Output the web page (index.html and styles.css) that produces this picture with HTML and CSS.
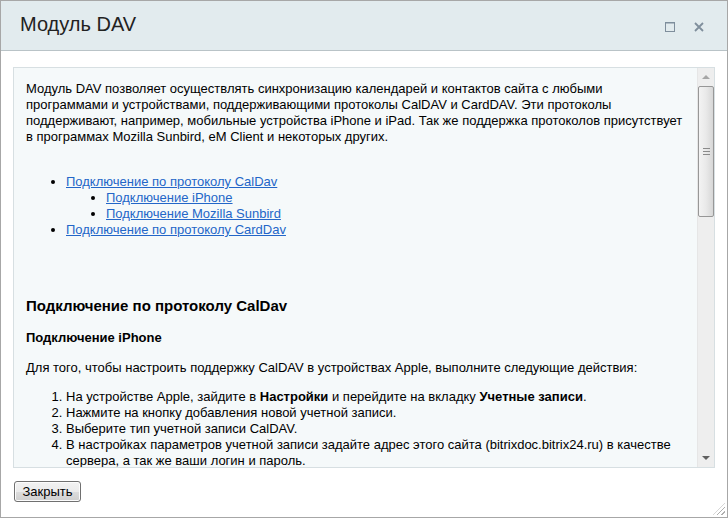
FILE: index.html
```html
<!DOCTYPE html>
<html lang="ru">
<head>
<meta charset="utf-8">
<title>Модуль DAV</title>
<link rel="stylesheet" href="styles.css">
</head>
<body>
<div class="dialog">
  <div class="header">
    <span class="title">Модуль DAV</span>
    <div class="tools">
      <svg class="tool" width="10" height="10" viewBox="0 0 10 10"><rect x="0.5" y="0.5" width="9" height="9" fill="none" stroke="#7f8e9c" stroke-width="1"/><line x1="0" y1="1" x2="10" y2="1" stroke="#7f8e9c" stroke-width="1"/></svg>
      <svg class="tool" width="10" height="10" viewBox="0 0 10 10"><path d="M1 1L9 9M9 1L1 9" stroke="#7f8e9c" stroke-width="1.8"/></svg>
    </div>
  </div>
  <div class="body">
    <div class="box">
      <div class="content">
        <p>Модуль DAV позволяет осуществлять синхронизацию календарей и контактов сайта с любыми программами и устройствами, поддерживающими протоколы CalDAV и CardDAV. Эти протоколы поддерживают, например, мобильные устройства iPhone и iPad. Так же поддержка протоколов присутствует в программах Mozilla Sunbird, eM Client и некоторых других.</p>
        <ul class="toc">
          <li><a href="#">Подключение по протоколу CalDav</a>
            <ul>
              <li><a href="#">Подключение iPhone</a></li>
              <li><a href="#">Подключение Mozilla Sunbird</a></li>
            </ul>
          </li>
          <li><a href="#">Подключение по протоколу CardDav</a></li>
        </ul>
        <h3>Подключение по протоколу CalDav</h3>
        <h4>Подключение iPhone</h4>
        <p>Для того, чтобы настроить поддержку CalDAV в устройствах Apple, выполните следующие действия:</p>
        <ol>
          <li>На устройстве Apple, зайдите в <b>Настройки</b> и перейдите на вкладку <b>Учетные записи</b>.</li>
          <li>Нажмите на кнопку добавления новой учетной записи.</li>
          <li>Выберите тип учетной записи CalDAV.</li>
          <li>В настройках параметров учетной записи задайте адрес этого сайта (bitrixdoc.bitrix24.ru) в качестве сервера, а так же ваши логин и пароль.</li>
        </ol>
      </div>
      <div class="scrollbar">
        <div class="arrow up"></div>
        <div class="track">
          <div class="thumb"><span class="grip"></span></div>
        </div>
        <div class="arrow down"></div>
      </div>
    </div>
    <div class="footer">
      <button class="btn">Закрыть</button>
    </div>
  </div>
  <div class="resize"></div>
</div>
</body>
</html>
```

FILE: styles.css
```css
html, body {
  margin: 0;
  padding: 0;
  background: #fff;
}
body {
  font-family: "Liberation Sans", Arial, sans-serif;
  font-size: 13px;
  color: #000;
}
.dialog {
  position: relative;
  width: 728px;
  height: 518px;
  box-sizing: border-box;
  border: 1px solid #a7a7a7;
  display: flex;
  flex-direction: column;
  background: #fff;
}
.header {
  height: 49px;
  flex: none;
  background: #e2ebee;
  border-bottom: 1px solid #b9c3c7;
  display: flex;
  align-items: center;
  padding: 0 23px 0 19px;
}
.title {
  font-size: 20px;
  color: #222;
  flex: 1;
  position: relative;
  top: -1px;
}
.tools {
  display: flex;
  gap: 19px;
  align-items: center;
  position: relative;
  top: 1px;
}
.tool {
  display: block;
}
.body {
  flex: 1;
  display: flex;
  flex-direction: column;
  padding: 16px 12px 0 12px;
}
.box {
  height: 401px;
  box-sizing: border-box;
  border: 1px solid #d7dfe2;
  background: #f5f9fa;
  display: flex;
}
.content {
  flex: 1;
  overflow: hidden;
  padding: 0 14px 0 12px;
  line-height: 16px;
}
.content p {
  margin: 13px 0;
}
.content a {
  color: #2366c8;
  text-decoration: underline;
}
.content ul, .content ol {
  margin: 13px 0;
  padding-left: 40px;
}
.content ul {
  list-style: disc;
}
.content ul ul {
  margin: 0;
  list-style: disc;
}
.content ul.toc {
  margin-top: 29px;
}
.content h3 {
  font-size: 15px;
  line-height: 18px;
  margin: 59px 0 15px;
}
.content h4 {
  font-size: 13px;
  line-height: 16px;
  margin: 15px 0 14px;
}
.scrollbar {
  width: 17px;
  flex: none;
  background: #eeeeee;
  border-left: 1px solid #e6e6e6;
  box-sizing: border-box;
  display: flex;
  flex-direction: column;
}
.arrow {
  height: 18px;
  flex: none;
  display: flex;
  align-items: center;
  justify-content: center;
}
.arrow::before {
  content: "";
  width: 0;
  height: 0;
  border-left: 4px solid transparent;
  border-right: 4px solid transparent;
}
.arrow.up::before {
  border-bottom: 4px solid #a6a6a6;
}
.arrow.down::before {
  border-top: 4px solid #606060;
}
.track {
  flex: 1;
}
.thumb {
  height: 131px;
  box-sizing: border-box;
  border: 1px solid #979797;
  border-radius: 2px;
  background: linear-gradient(to right, #f3f3f3 0%, #e9e9e9 50%, #d7d7d7 100%);
  display: flex;
  align-items: center;
  justify-content: center;
}
.grip {
  width: 7px;
  height: 5px;
  border-top: 1px solid #8a8a8a;
  border-bottom: 1px solid #8a8a8a;
  position: relative;
}
.grip::after {
  content: "";
  position: absolute;
  left: 0;
  right: 0;
  top: 2px;
  border-top: 1px solid #8a8a8a;
}
.footer {
  padding-top: 13px;
}
.btn {
  font-family: "Liberation Sans", Arial, sans-serif;
  font-size: 13px;
  color: #000;
  height: 21px;
  width: 67px;
  margin-left: 1px;
  padding: 0 0 1px;
  border: 1px solid #707070;
  border-radius: 3px;
  background: linear-gradient(to bottom, #f2f2f2 0%, #ebebeb 50%, #dddddd 51%, #cfcfcf 100%);
  box-shadow: inset 0 0 0 1px #fcfcfc;
}
.resize {
  position: absolute;
  right: 2px;
  bottom: 2px;
  width: 12px;
  height: 12px;
  background: repeating-linear-gradient(135deg, transparent 0 2px, #b0b0b0 2px 3px);
  clip-path: polygon(100% 0, 100% 100%, 0 100%);
}
```
